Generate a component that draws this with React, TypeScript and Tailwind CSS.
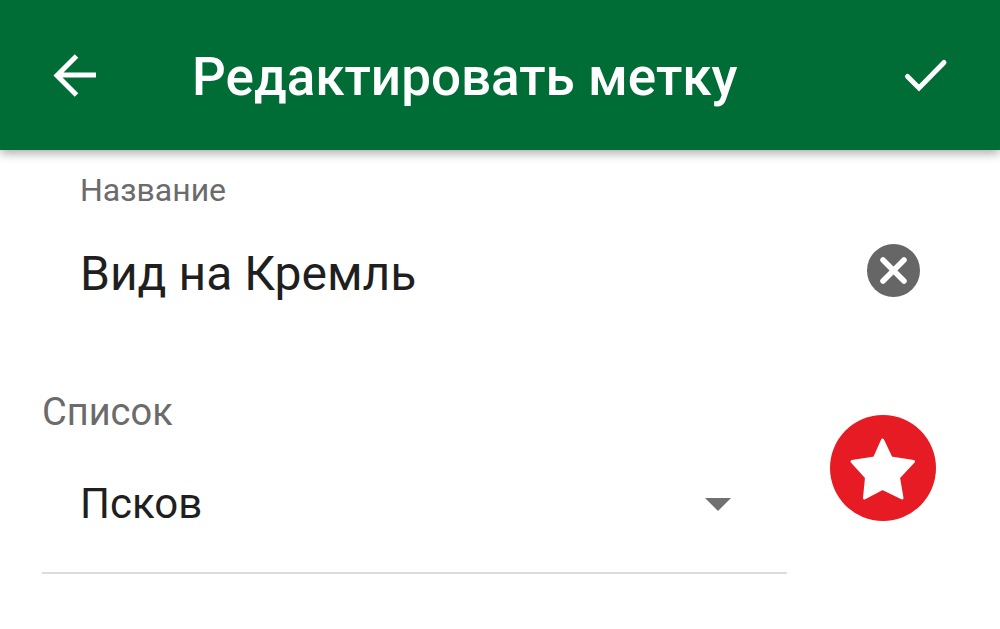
import { useState } from "react";

const lists = ["Псков", "Избранное", "Хочу посетить"];

export default function App() {
  const [name, setName] = useState("Вид на Кремль");
  const [list, setList] = useState(lists[0]);

  return (
    <div className="min-h-screen bg-white font-['Roboto',sans-serif]">
      <header className="flex h-[150px] items-center bg-[#006d36] px-[50px] shadow-[0_3px_10px_rgba(0,0,0,0.35)]">
        <button type="button" aria-label="Назад" className="text-white">
          <svg viewBox="0 0 48 48" className="h-12 w-12" fill="none" stroke="currentColor" strokeWidth="5">
            <path d="M46 24H7M26.5 5L7 24.5l19.5 19.5" />
          </svg>
        </button>
        <h1 className="ml-[94px] flex-1 pt-1 text-[53px] leading-[60px] font-medium text-white">
          Редактировать метку
        </h1>
        <button type="button" aria-label="Сохранить" className="text-white">
          <svg
            viewBox="0 0 48 48"
            className="h-12 w-12"
            fill="none"
            stroke="currentColor"
            strokeWidth="5"
            strokeLinecap="round"
          >
            <path d="M5.5 25.5L17 37 42 11.5" />
          </svg>
        </button>
      </header>

      <form onSubmit={(e) => e.preventDefault()}>
        <div className="flex items-end px-20 pt-5">
          <div className="min-w-0 flex-1">
            <label htmlFor="name" className="block text-[32px] leading-10 text-[#6b6b6b]">
              Название
            </label>
            <input
              id="name"
              type="text"
              value={name}
              onChange={(e) => setName(e.target.value)}
              className="mt-8 block h-16 w-full bg-transparent text-[48px] text-[#1f1f1f] outline-none"
            />
          </div>
          <button type="button" aria-label="Очистить" onClick={() => setName("")} className="mb-2">
            <svg viewBox="0 0 54 54" className="h-[54px] w-[54px]">
              <circle cx="27.5" cy="26.5" r="26.5" fill="#666" />
              <path
                d="M17 16l21 21M38 16L17 37"
                stroke="#fff"
                strokeWidth="5.5"
                strokeLinecap="round"
              />
            </svg>
          </button>
        </div>

        <div className="mt-20 flex items-start pr-16 pl-[42px]">
          <div className="min-w-0 flex-1 border-b-2 border-[#dcdcdc]">
            <label htmlFor="list" className="block text-[38px] leading-[52px] text-[#6b6b6b]">
              Список
            </label>
            <div className="relative mt-7">
              <select
                id="list"
                value={list}
                onChange={(e) => setList(e.target.value)}
                className="block h-[106px] w-full appearance-none bg-transparent pr-20 pb-8 pl-[38px] text-[42px] text-[#1f1f1f] outline-none"
              >
                {lists.map((item) => (
                  <option key={item}>{item}</option>
                ))}
              </select>
              <svg
                viewBox="0 0 26 13"
                className="pointer-events-none absolute top-8 right-14 h-[13px] w-[26px]"
              >
                <path d="M0 0h26L13 13z" fill="#707070" />
              </svg>
            </div>
          </div>
          <button type="button" aria-label="Выбрать значок" className="mt-[29px] ml-[43px]">
            <svg viewBox="0 0 106 106" className="h-[106px] w-[106px]">
              <circle cx="53" cy="53" r="53" fill="#e61b23" />
              <path
                d="M52.5 25L61 43 83.500 46.5 68.5 62.500 72 83 52.5 73.500 34.5 83 36.5 62.500 22 46.5 44.5 43z"
                fill="#fff"
                stroke="#fff"
                strokeWidth="3"
                strokeLinejoin="round"
              />
            </svg>
          </button>
        </div>
      </form>
    </div>
  );
}
